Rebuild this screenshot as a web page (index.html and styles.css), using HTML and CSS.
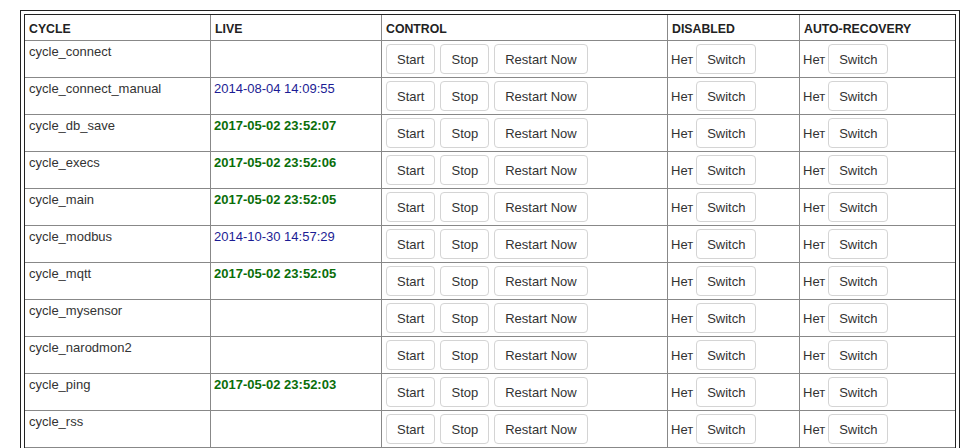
FILE: index.html
```html
<!DOCTYPE html>
<html lang="en">
<head>
    <meta charset="UTF-8">
    <title>Cycles</title>
    <link rel="stylesheet" href="styles.css">
</head>
<body>
    <div class="frame">
        <table class="cycles">
            <colgroup>
                <col class="c-name">
                <col class="c-live">
                <col class="c-control">
                <col class="c-disabled">
                <col class="c-recovery">
            </colgroup>
            <thead>
                <tr>
                    <th>CYCLE</th>
                    <th>LIVE</th>
                    <th>CONTROL</th>
                    <th>DISABLED</th>
                    <th>AUTO-RECOVERY</th>
                </tr>
            </thead>
            <tbody>
                <tr>
                    <td>cycle_connect</td>
                    <td></td>
                    <td><div class="actions"><button>Start</button><button>Stop</button><button>Restart Now</button></div></td>
                    <td><div class="flag">Нет <button>Switch</button></div></td>
                    <td><div class="flag">Нет <button>Switch</button></div></td>
                </tr>
                <tr>
                    <td>cycle_connect_manual</td>
                    <td><span class="stale">2014-08-04 14:09:55</span></td>
                    <td><div class="actions"><button>Start</button><button>Stop</button><button>Restart Now</button></div></td>
                    <td><div class="flag">Нет <button>Switch</button></div></td>
                    <td><div class="flag">Нет <button>Switch</button></div></td>
                </tr>
                <tr>
                    <td>cycle_db_save</td>
                    <td><span class="alive">2017-05-02 23:52:07</span></td>
                    <td><div class="actions"><button>Start</button><button>Stop</button><button>Restart Now</button></div></td>
                    <td><div class="flag">Нет <button>Switch</button></div></td>
                    <td><div class="flag">Нет <button>Switch</button></div></td>
                </tr>
                <tr>
                    <td>cycle_execs</td>
                    <td><span class="alive">2017-05-02 23:52:06</span></td>
                    <td><div class="actions"><button>Start</button><button>Stop</button><button>Restart Now</button></div></td>
                    <td><div class="flag">Нет <button>Switch</button></div></td>
                    <td><div class="flag">Нет <button>Switch</button></div></td>
                </tr>
                <tr>
                    <td>cycle_main</td>
                    <td><span class="alive">2017-05-02 23:52:05</span></td>
                    <td><div class="actions"><button>Start</button><button>Stop</button><button>Restart Now</button></div></td>
                    <td><div class="flag">Нет <button>Switch</button></div></td>
                    <td><div class="flag">Нет <button>Switch</button></div></td>
                </tr>
                <tr>
                    <td>cycle_modbus</td>
                    <td><span class="stale">2014-10-30 14:57:29</span></td>
                    <td><div class="actions"><button>Start</button><button>Stop</button><button>Restart Now</button></div></td>
                    <td><div class="flag">Нет <button>Switch</button></div></td>
                    <td><div class="flag">Нет <button>Switch</button></div></td>
                </tr>
                <tr>
                    <td>cycle_mqtt</td>
                    <td><span class="alive">2017-05-02 23:52:05</span></td>
                    <td><div class="actions"><button>Start</button><button>Stop</button><button>Restart Now</button></div></td>
                    <td><div class="flag">Нет <button>Switch</button></div></td>
                    <td><div class="flag">Нет <button>Switch</button></div></td>
                </tr>
                <tr>
                    <td>cycle_mysensor</td>
                    <td></td>
                    <td><div class="actions"><button>Start</button><button>Stop</button><button>Restart Now</button></div></td>
                    <td><div class="flag">Нет <button>Switch</button></div></td>
                    <td><div class="flag">Нет <button>Switch</button></div></td>
                </tr>
                <tr>
                    <td>cycle_narodmon2</td>
                    <td></td>
                    <td><div class="actions"><button>Start</button><button>Stop</button><button>Restart Now</button></div></td>
                    <td><div class="flag">Нет <button>Switch</button></div></td>
                    <td><div class="flag">Нет <button>Switch</button></div></td>
                </tr>
                <tr>
                    <td>cycle_ping</td>
                    <td><span class="alive">2017-05-02 23:52:03</span></td>
                    <td><div class="actions"><button>Start</button><button>Stop</button><button>Restart Now</button></div></td>
                    <td><div class="flag">Нет <button>Switch</button></div></td>
                    <td><div class="flag">Нет <button>Switch</button></div></td>
                </tr>
                <tr>
                    <td>cycle_rss</td>
                    <td></td>
                    <td><div class="actions"><button>Start</button><button>Stop</button><button>Restart Now</button></div></td>
                    <td><div class="flag">Нет <button>Switch</button></div></td>
                    <td><div class="flag">Нет <button>Switch</button></div></td>
                </tr>
            </tbody>
        </table>
    </div>
</body>
</html>
```

FILE: styles.css
```css
html, body {
    overflow: hidden;
}
body {
    margin: 10px 0 0 20px;
    font-family: "Liberation Sans", Arial, sans-serif;
    font-size: 13px;
    color: #333;
    background: #fff;
}
.frame {
    width: 932px;
    padding: 3px;
    border: 1px solid #222;
}
.cycles {
    width: 932px;
    table-layout: fixed;
    border-collapse: separate;
    border-spacing: 0;
    border: 1px solid #222;
}
.c-name { width: 186px; }
.c-live { width: 171px; }
.c-control { width: 286px; }
.c-disabled { width: 132px; }
.c-recovery { width: 155px; }
.cycles th,
.cycles td {
    border-right: 1px solid #888;
    border-bottom: 1px solid #888;
    text-align: left;
    vertical-align: top;
}
.cycles th:last-child,
.cycles td:last-child {
    border-right: none;
}
.cycles th {
    padding: 5px 4px 1px;
    font-size: 12.3px;
    line-height: 19px;
    font-weight: bold;
    color: #222;
}
.cycles td {
    padding: 3px;
    height: 30px;
    line-height: 16px;
}
.cycles td:first-child {
    padding-left: 4px;
}
.stale {
    color: #1c1c94;
}
.alive {
    color: #0a6e0a;
    font-weight: bold;
}
.actions {
    display: flex;
    gap: 5px;
    padding-left: 1px;
}
.flag {
    display: flex;
    align-items: baseline;
    gap: 3px;
    line-height: 14px;
}
button {
    height: 30px;
    padding: 0 10px;
    border: 1px solid #d4d4d4;
    border-radius: 4px;
    background: #fff;
    font-family: "Liberation Sans", Arial, sans-serif;
    font-size: 13px;
    color: #333;
    cursor: pointer;
}
button:hover {
    background: #f2f2f2;
}
```
